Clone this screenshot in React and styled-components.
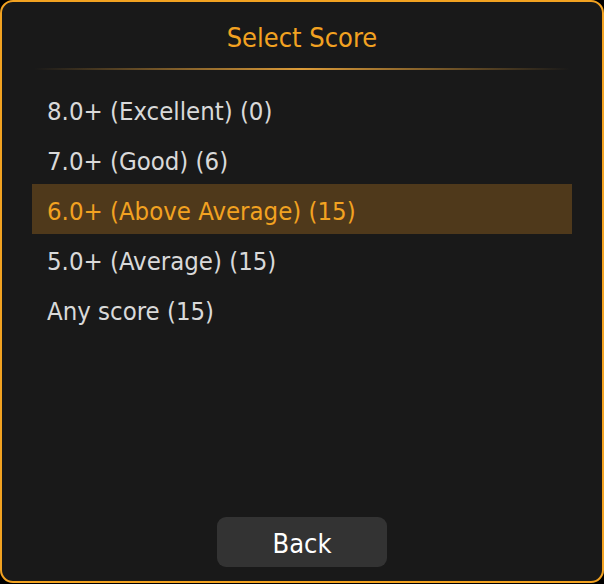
import React, { useState } from 'react';
import styled, { createGlobalStyle } from 'styled-components';

const GlobalStyle = createGlobalStyle`
  html, body {
    margin: 0;
    padding: 0;
    background: #000000;
  }
  * {
    box-sizing: border-box;
  }
`;

const Panel = styled.div`
  width: 604px;
  height: 583px;
  display: flex;
  flex-direction: column;
  background: #191919;
  border: 2px solid #f2a221;
  border-radius: 13px;
  padding: 0 30px 14px;
  font-family: "DejaVu Sans Condensed", "DejaVu Sans", sans-serif;
`;

const Title = styled.h1`
  margin: 0;
  height: 66px;
  display: flex;
  align-items: center;
  justify-content: center;
  padding-top: 5px;
  font-size: 27px;
  font-weight: normal;
  color: #f2a221;
`;

const Divider = styled.div`
  height: 2px;
  margin: 0 2px 14px;
  background: linear-gradient(
    90deg,
    rgba(242, 162, 33, 0) 0%,
    rgba(242, 170, 60, 0.9) 50%,
    rgba(242, 162, 33, 0) 100%
  );
`;

const List = styled.ul`
  list-style: none;
  margin: 0;
  padding: 0;
`;

const Item = styled.li`
  height: 50px;
  display: flex;
  align-items: center;
  padding: 3px 15px 0;
  font-size: 25.5px;
  cursor: pointer;
  color: ${p => (p.$active ? '#f2a221' : '#d9d9d9')};
  background: ${p => (p.$active ? '#4f391b' : 'transparent')};
`;

const Footer = styled.div`
  margin-top: auto;
  display: flex;
  justify-content: center;
`;

const BackButton = styled.button`
  width: 170px;
  height: 50px;
  padding-top: 3px;
  border: none;
  border-radius: 9px;
  background: #333333;
  color: #ffffff;
  font-family: inherit;
  font-size: 27px;
  cursor: pointer;
`;

const options = [
  { id: 8, label: '8.0+ (Excellent) (0)' },
  { id: 7, label: '7.0+ (Good) (6)' },
  { id: 6, label: '6.0+ (Above Average) (15)' },
  { id: 5, label: '5.0+ (Average) (15)' },
  { id: 0, label: 'Any score (15)' },
];

const App = () => {
  const [selected, setSelected] = useState(6);

  return (
    <>
      <GlobalStyle />
      <Panel>
        <Title>Select Score</Title>
        <Divider />
        <List>
          {options.map(opt => (
            <Item
              key={opt.id}
              $active={opt.id === selected}
              onClick={() => setSelected(opt.id)}
            >
              {opt.label}
            </Item>
          ))}
        </List>
        <Footer>
          <BackButton>Back</BackButton>
        </Footer>
      </Panel>
    </>
  );
};

export default App;
